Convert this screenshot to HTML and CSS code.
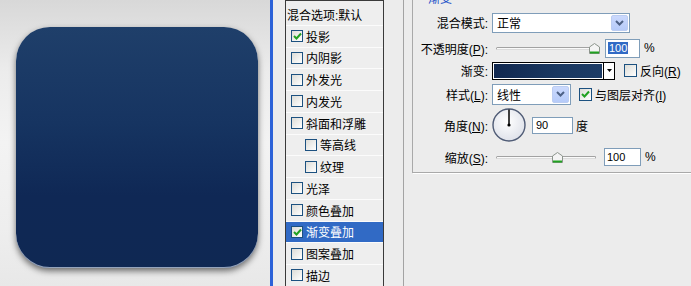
FILE: index.html
```html
<!DOCTYPE html>
<html lang="zh-CN">
<head>
    <meta charset="UTF-8">
    <title>图层样式 - 渐变叠加</title>
    <link rel="stylesheet" href="styles.css">
</head>
<body>
    <div class="app">
        <!-- document preview -->
        <div class="canvas">
            <div class="icon"></div>
        </div>
        <div class="divider"></div>

        <!-- layer style list -->
        <div class="styles-pane">
            <ul class="style-list">
                <li class="style-item title">混合选项:默认</li>
                <li class="style-item"><span class="check on"><svg width="9" height="8" viewBox="0 0 9 8"><path d="M1 4 L3.5 6.5 L8 1.5" fill="none" stroke="#21a121" stroke-width="2"/></svg></span>投影</li>
                <li class="style-item"><span class="check"></span>内阴影</li>
                <li class="style-item"><span class="check"></span>外发光</li>
                <li class="style-item"><span class="check"></span>内发光</li>
                <li class="style-item"><span class="check"></span>斜面和浮雕</li>
                <li class="style-item sub"><span class="check"></span>等高线</li>
                <li class="style-item sub"><span class="check"></span>纹理</li>
                <li class="style-item"><span class="check"></span>光泽</li>
                <li class="style-item"><span class="check"></span>颜色叠加</li>
                <li class="style-item selected"><span class="check on"><svg width="9" height="8" viewBox="0 0 9 8"><path d="M1 4 L3.5 6.5 L8 1.5" fill="none" stroke="#21a121" stroke-width="2"/></svg></span>渐变叠加</li>
                <li class="style-item"><span class="check"></span>图案叠加</li>
                <li class="style-item"><span class="check"></span>描边</li>
            </ul>
        </div>

        <!-- gradient overlay options -->
        <div class="options">
            <fieldset class="group">
                <legend>渐变</legend>
                <div class="form">
                    <span class="label">混合模式:</span>
                    <div class="field">
                        <div class="select mode">
                            <span>正常</span>
                            <span class="drop"><svg width="9" height="6" viewBox="0 0 9 6"><path d="M1 1 L4.5 4.5 L8 1" fill="none" stroke="#4d6185" stroke-width="2"/></svg></span>
                        </div>
                    </div>

                    <span class="label">不透明度(<u>P</u>):</span>
                    <div class="field">
                        <div class="slider">
                            <div class="track"></div>
                            <span class="thumb" style="left: calc(98% - 5px)"><svg width="11" height="11" viewBox="0 0 11 11"><path d="M0.5 4 L5.5 0.5 L10.5 4 L10.5 10.5 L0.5 10.5 Z" fill="#f4f4f4" stroke="#8c948c"/><rect x="1" y="8.5" width="9" height="2" fill="#21a121"/></svg></span>
                        </div>
                        <div class="num opacity"><span class="sel">100</span></div>
                        <span class="unit">%</span>
                    </div>

                    <span class="label">渐变:</span>
                    <div class="field">
                        <div class="swatch"></div>
                        <div class="swatch-btn"><svg width="5" height="3" viewBox="0 0 5 3"><path d="M0 0 H5 L2.5 3 Z" fill="#000"/></svg></div>
                        <span class="check big reverse"></span>
                        <span class="cb-label">反向(<u>R</u>)</span>
                    </div>

                    <span class="label">样式(<u>L</u>):</span>
                    <div class="field">
                        <div class="select kind">
                            <span>线性</span>
                            <span class="drop"><svg width="9" height="6" viewBox="0 0 9 6"><path d="M1 1 L4.5 4.5 L8 1" fill="none" stroke="#4d6185" stroke-width="2"/></svg></span>
                        </div>
                        <span class="check big on align"><svg width="9" height="8" viewBox="0 0 9 8"><path d="M1 4 L3.5 6.5 L8 1.5" fill="none" stroke="#21a121" stroke-width="2"/></svg></span>
                        <span class="cb-label">与图层对齐(<u>I</u>)</span>
                    </div>

                    <span class="label">角度(<u>N</u>):</span>
                    <div class="field">
                        <svg class="dial" width="34" height="34" viewBox="0 0 34 34">
                            <defs>
                                <radialGradient id="dialFill" cx="45%" cy="40%" r="60%">
                                    <stop offset="0" stop-color="#ffffff"/>
                                    <stop offset="1" stop-color="#dfe2ea"/>
                                </radialGradient>
                            </defs>
                            <circle cx="17" cy="17" r="16" fill="url(#dialFill)" stroke="#4f5b75" stroke-width="1.4"/>
                            <line x1="17" y1="1.5" x2="17" y2="17" stroke="#000" stroke-width="1.5"/>
                            <circle cx="17" cy="17" r="1.6" fill="#000"/>
                        </svg>
                        <div class="num angle">90</div>
                        <span class="unit deg">度</span>
                    </div>

                    <span class="label">缩放(<u>S</u>):</span>
                    <div class="field">
                        <div class="slider">
                            <div class="track"></div>
                            <span class="thumb" style="left: calc(61% - 5px)"><svg width="11" height="11" viewBox="0 0 11 11"><path d="M0.5 4 L5.5 0.5 L10.5 4 L10.5 10.5 L0.5 10.5 Z" fill="#f4f4f4" stroke="#8c948c"/><rect x="1" y="8.5" width="9" height="2" fill="#21a121"/></svg></span>
                        </div>
                        <div class="num scale">100</div>
                        <span class="unit">%</span>
                    </div>
                </div>
            </fieldset>
        </div>
    </div>
</body>
</html>
```

FILE: styles.css
```css
* {
    box-sizing: border-box;
}

body {
    margin: 0;
    width: 691px;
    height: 286px;
    overflow: hidden;
    font-family: "Liberation Sans", "Noto Sans CJK SC", sans-serif;
    font-size: 12px;
    color: #000;
    background: #ececec;
}

.app {
    display: flex;
    height: 286px;
}

/* preview */
.canvas {
    flex: none;
    width: 270px;
    padding: 27px 0 0 16px;
    background: linear-gradient(#d8d8d8 0%, #ececec 25%, #f3f3f3 50%, #eeeeee 80%, #e8e8e8 100%);
}

.icon {
    width: 242px;
    height: 241px;
    border-radius: 34px;
    background: linear-gradient(#1f3f6a 0%, #163461 40%, #0f2855 70%, #0f2853 100%);
    box-shadow: 0 3px 6px rgba(0, 0, 0, 0.55), inset 0 -1px 0 rgba(205, 215, 232, 0.7);
}

.divider {
    flex: none;
    width: 3px;
    background: #2d62d8;
}

/* style list */
.styles-pane {
    flex: none;
    width: 130px;
    padding-left: 12px;
}

.style-list {
    width: 99px;
    height: 100%;
    margin: 0;
    padding: 3px 0 0;
    list-style: none;
    background: #eeeeee;
    border: 1px solid #3a3a3a;
    border-bottom: none;
    overflow: hidden;
}

.style-item {
    display: flex;
    align-items: center;
    gap: 3px;
    height: 21.75px;
    padding-left: 5px;
    white-space: nowrap;
    border-bottom: 1px solid #fbfbfb;
}

.style-item.title {
    padding-left: 1px;
}

.style-item.sub {
    padding-left: 19px;
}

.style-item.selected {
    background: #316ac5;
    color: #fff;
}

.check {
    flex: none;
    display: inline-flex;
    align-items: center;
    justify-content: center;
    width: 12px;
    height: 12px;
    border: 1px solid #1c5180;
    background: linear-gradient(135deg, #dcdcd7, #ffffff);
}

.check.big {
    width: 13px;
    height: 13px;
}

/* options panel */
.options {
    flex: 1;
    border-left: 1px solid #a3a3a3;
    padding-left: 8px;
    overflow: hidden;
}

.group {
    margin: -8px -12px 0 0;
    padding: 4px 0 0;
    border: 1px solid #a9a9a9;
    box-shadow: 1px 1px 0 #ffffff;
}

.group legend {
    margin-left: 13px;
    padding: 0 2px;
    line-height: 14px;
    color: #1c52c9;
}

.form {
    display: grid;
    grid-template-columns: 75px auto;
    grid-template-rows: 25px 26px 19px 28px 34px 30px;
    column-gap: 4px;
    align-items: center;
}

.label {
    text-align: right;
    white-space: nowrap;
}

.field {
    display: flex;
    align-items: center;
    white-space: nowrap;
}

.select {
    display: flex;
    align-items: center;
    justify-content: space-between;
    border: 1px solid #7f9db9;
    background: #fff;
    padding: 0 1px 0 4px;
}

.select.mode {
    width: 138px;
    height: 20px;
}

.select.kind {
    width: 79px;
    height: 21px;
}

.drop {
    display: flex;
    align-items: center;
    justify-content: center;
    width: 17px;
    height: calc(100% - 2px);
    border-radius: 2px;
    background: linear-gradient(#cbd9fd, #b6cbf9);
    border: 1px solid #bccdf2;
}

.slider {
    position: relative;
    display: flex;
    align-items: center;
    width: 100px;
    height: 11px;
    margin-left: 4px;
}

.track {
    width: 100%;
    height: 3px;
    border: 1px solid #a2a2a2;
    border-bottom-color: #dcdcdc;
    border-radius: 2px;
    background: #fafafa;
}

.thumb {
    position: absolute;
    top: 0;
    display: flex;
}

.num {
    display: flex;
    align-items: center;
    border: 1px solid #7f9db9;
    background: #fff;
    padding-left: 2px;
    font-size: 11px;
}

.num.opacity {
    width: 35px;
    height: 19px;
    margin-left: 9px;
}

.num.scale {
    width: 37px;
    height: 18px;
    margin-left: 8px;
}

.num.angle {
    width: 41px;
    height: 17px;
    margin-left: 6px;
    padding-left: 3px;
}

.sel {
    background: #316ac5;
    color: #fff;
    padding: 0 1px;
}

.unit {
    margin-left: 4px;
}

.unit.deg {
    margin-left: 3px;
}

.swatch {
    width: 112px;
    height: 18px;
    border: 1px solid #000;
    box-shadow: inset 0 0 0 1px #ffffff;
    background: linear-gradient(to right, #11284f, #1a3861 60%, #1d3c66);
}

.swatch-btn {
    display: flex;
    align-items: center;
    justify-content: center;
    width: 11px;
    height: 18px;
    border: 1px solid #000;
    border-left: none;
    background: #fff;
}

.check.reverse {
    margin-left: 9px;
}

.check.align {
    margin-left: 8px;
}

.cb-label {
    margin-left: 3px;
}

.dial {
    display: block;
}
```
